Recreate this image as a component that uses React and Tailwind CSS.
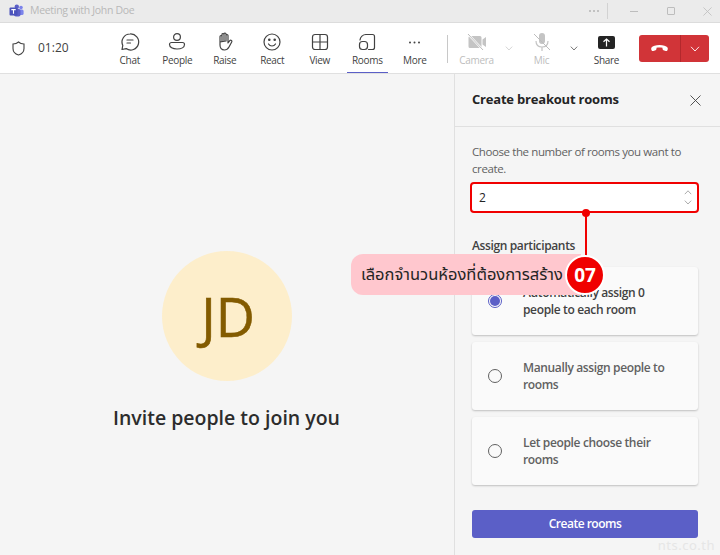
const Tool = ({ label, children, dim, active, w = "w-[47.5px]" }) => (
  <div className={`relative flex h-full shrink-0 flex-col items-center ${w}`}>
    <div className="mt-[7px] flex h-[24px] w-[24px] items-center justify-center">{children}</div>
    <span className={`-mt-[1px] text-[10px] leading-[14px] tracking-[-0.3px] ${dim ? "text-[#bdbdbd]" : "text-[#424242]"}`}>{label}</span>
    {active && <div className="absolute bottom-[0px] left-[3px] right-[3px] h-[1.5px] bg-[#5b5fc7]" />}
  </div>
);

const S = ({ children, c = "#424242", w = 1.2 }) => (
  <svg width="22" height="22" viewBox="0 0 22 22" fill="none" stroke={c} strokeWidth={w} strokeLinecap="round" strokeLinejoin="round">{children}</svg>
);

const Chevron = ({ c = "#616161", up, size = 10 }) => (
  <svg width={size} height={size * 0.6} viewBox="0 0 10 6" fill="none" stroke={c} strokeWidth="0.9">
    <path d={up ? "M1 5.2 5 1l4 4.2" : "M1 .8 5 5l4-4.2"} />
  </svg>
);

const Radio = ({ on }) => (
  <div className={`flex h-[14px] w-[14px] shrink-0 items-center justify-center rounded-full border ${on ? "border-[#5b5fc7]" : "border-[#616161]"}`}>
    {on && <div className="h-[10px] w-[10px] rounded-full bg-[#5b5fc7]" />}
  </div>
);

const Card = ({ on, children }) => (
  <div className={`flex h-[68px] items-center rounded-[3px] bg-[#fafafa] pl-[16px] pr-[20px] shadow-[0_1px_2px_rgba(0,0,0,0.22)] ${on ? "text-[#424242]" : "text-[#616161]"}`}>
    <Radio on={on} />
    <div className="ml-[21px] text-[12px] font-semibold leading-[17px] tracking-[-0.36px]">{children}</div>
  </div>
);

export default function App() {
  return (
    <div className="relative flex h-[555px] w-[720px] flex-col overflow-hidden bg-[#f5f5f5] font-['Open_Sans','Noto_Sans',sans-serif]">
      {/* Title bar */}
      <div className="flex h-[23px] shrink-0 items-center border-b border-[#dcdcdc] bg-[#ebebeb] pl-[9px]">
        <svg width="15" height="14" viewBox="0 0 15 14" className="shrink-0">
          <circle cx="12" cy="3.5" r="1.8" fill="#7b83eb" />
          <rect x="9" y="5.5" width="5.6" height="5.5" rx="1.6" fill="#7b83eb" />
          <circle cx="7.8" cy="2.8" r="2.2" fill="#5b5fc7" />
          <rect x="5" y="5" width="6.5" height="7.5" rx="1.8" fill="#5b5fc7" />
          <rect x="0.5" y="3.5" width="8" height="8" rx="1" fill="#4b53bc" />
          <path d="M2.3 5.6h4.4M4.5 5.6v4.2" stroke="#fff" strokeWidth="1.1" fill="none" />
        </svg>
        <span className="ml-[6px] text-[10.5px] tracking-[-0.3px] text-[#b8b8b8]">Meeting with John Doe</span>
        <div className="ml-auto flex items-center">
          <span className="mr-[8px] flex gap-[2px]">
            <i className="h-[2px] w-[2px] rounded-full bg-[#b5b5b5]" />
            <i className="h-[2px] w-[2px] rounded-full bg-[#b5b5b5]" />
            <i className="h-[2px] w-[2px] rounded-full bg-[#b5b5b5]" />
          </span>
          <div className="h-[16px] w-px bg-[#d2d2d2]" />
          <div className="ml-[22px] h-px w-[8px] bg-[#bdbdbd]" />
          <div className="ml-[29px] h-[8px] w-[8px] rounded-[1px] border border-[#bdbdbd]" />
          <svg width="9" height="9" viewBox="0 0 10 10" className="ml-[28px] mr-[8px]" stroke="#bdbdbd" strokeWidth="0.9">
            <path d="M.5.5l9 9M9.5.5l-9 9" />
          </svg>
        </div>
      </div>

      {/* Toolbar */}
      <div className="flex h-[51px] shrink-0 items-stretch border-b border-[#e0e0e0] bg-white">
        <div className="flex w-[106px] shrink-0 items-center pl-[12px]">
          <svg width="13" height="15" viewBox="0 0 13 15" fill="none" stroke="#424242" strokeWidth="1.1">
            <path d="M6.5 1C5 2.4 3 3 1 3v4.5C1 10.8 3.3 13 6.5 14 9.700 13 12 10.800 12 7.500V3C10 3 8 2.400 6.500 1z" />
          </svg>
          <span className="ml-[13px] text-[12px] text-[#424242]">01:20</span>
        </div>
        <Tool label="Chat">
          <S><path d="M11 3a8 8 0 0 0-7.200 11.400L3 18.500l4.200-.9A8 8 0 1 0 11 3z" /><path d="M8 9h6M8 12h3.500" /></S>
        </Tool>
        <Tool label="People">
          <S><circle cx="11" cy="6" r="3.400" /><path d="M5.500 11.500h11a2 2 0 0 1 2 2c0 2.700-3.200 4.500-7.500 4.500s-7.500-1.800-7.500-4.500a2 2 0 0 1 2-2z" /></S>
        </Tool>
        <Tool label="Raise">
          <S><path d="M6 11V5.500a1 1 0 0 1 2 0M8 10V3.500a1 1 0 0 1 2 0V10M10 10V3a1 1 0 0 1 2 0v7M12 10V4.500a1 1 0 0 1 2 0V12l1.800-2.300c1-1.200 2.700.1 1.900 1.300L15 16c-1 1.800-2.300 3-4.500 3C7.500 19 6 17 6 14v-3z" /></S>
        </Tool>
        <Tool label="React">
          <S><circle cx="11" cy="11" r="8" /><path d="M7.500 13c.8 1.300 2 2 3.500 2s2.700-.7 3.500-2" /><circle cx="8.300" cy="8.800" r=".7" fill="#424242" /><circle cx="13.700" cy="8.800" r=".7" fill="#424242" /></S>
        </Tool>
        <Tool label="View">
          <S><rect x="3.500" y="3.500" width="15" height="15" rx="2.500" /><path d="M11 3.500v15M3.500 11h15" /></S>
        </Tool>
        <Tool label="Rooms" active>
          <S><path d="M10 3.500h6.500a2 2 0 0 1 2 2v11a2 2 0 0 1-2 2h-4" /><path d="M10 3.500A6 6 0 0 0 4 9" /><rect x="3.500" y="10.500" width="8" height="8" rx="3" /></S>
        </Tool>
        <Tool label="More">
          <svg width="11" height="3" viewBox="0 0 11 3" fill="#424242"><circle cx="1" cy="1.500" r="1" /><circle cx="5.500" cy="1.500" r="1" /><circle cx="10" cy="1.500" r="1" /></svg>
        </Tool>
        <div className="ml-[8px] mr-[5px] mt-[12px] h-[28px] w-px shrink-0 bg-[#c8c8c8]" />
        <Tool label="Camera" dim w="w-[48px]">
          <svg width="22" height="22" viewBox="0 0 22 22">
            <path d="M4 5h10a1.500 1.500 0 0 1 1.500 1.500v9A1.500 1.500 0 0 1 14 17H4a1.500 1.500 0 0 1-1.500-1.500v-9A1.500 1.500 0 0 1 4 5z" fill="#c4c4c4" />
            <path d="M16.500 8.500 20 6v10l-3.500-2.500z" fill="#c4c4c4" />
            <path d="M2 3l15 16" stroke="#fff" strokeWidth="2" />
            <path d="M2 3l15 16" stroke="#bdbdbd" strokeWidth="1" />
          </svg>
        </Tool>
        <div className="flex w-[17px] shrink-0 justify-center pt-[23px]"><Chevron c="#c4c4c4" size={8} /></div>
        <Tool label="Mic" dim w="w-[48px]">
          <svg width="22" height="22" viewBox="0 0 22 22" fill="none">
            <rect x="8" y="2" width="6" height="11" rx="3" fill="#c4c4c4" />
            <path d="M5 10c0 4 2.500 6 6 6s6-2 6-6M11 16v4" stroke="#c4c4c4" strokeWidth="1.200" />
            <path d="M3 3l16 16" stroke="#bdbdbd" strokeWidth="1" />
          </svg>
        </Tool>
        <div className="flex w-[17px] shrink-0 justify-center pt-[23px]"><Chevron c="#424242" size={8} /></div>
        <Tool label="Share" w="w-[48px]">
          <div className="flex h-[13px] w-[17px] items-center justify-center rounded-[2px] bg-[#242424]">
            <svg width="9" height="9" viewBox="0 0 9 9" fill="none" stroke="#fff" strokeWidth="1.200"><path d="M4.500 8.500V1M1.500 3.800 4.500 1l3 2.800" /></svg>
          </div>
        </Tool>
        <div className="ml-[8px] mt-[12px] flex h-[27px] w-[70px] shrink-0 overflow-hidden rounded-[3px] bg-[#d13438]">
          <div className="flex w-[42px] items-center justify-center border-r border-[#b3282c]">
            <svg width="17" height="7" viewBox="0 0 17 7" fill="#fff">
              <path d="M8.500 0C4.800 0 1.600 1 .5 2.500c-.5.800-.4 2 .2 3 .4.600 1 .700 1.600.5l2.300-.8c.6-.2.900-.8.900-1.400v-1c1.900-.5 4-.5 6 0v1c0 .6.300 1.200.9 1.400l2.300.8c.6.200 1.200.1 1.600-.5.600-1 .700-2.200.2-3C15.400 1 12.200 0 8.500 0z" />
            </svg>
          </div>
          <div className="flex flex-1 items-center justify-center"><Chevron c="#fff" /></div>
        </div>
      </div>

      {/* Body */}
      <div className="flex min-h-0 flex-1">
        <main className="flex flex-1 flex-col items-center pr-[1px] pt-[177px]">
          <div className="flex h-[130px] w-[130px] items-center justify-center rounded-full bg-[#fdeecb] pl-[3px] text-[54px] font-normal leading-none text-[#835b00] [-webkit-text-stroke:0.6px_#835b00]">JD</div>
          <div className="mt-[24px] text-[19.5px] font-semibold leading-[26px] text-[#2c2c2c]">Invite people to join you</div>
        </main>
        <aside className="flex w-[266px] shrink-0 flex-col border-l border-[#e0e0e0]">
          <div className="flex h-[53px] shrink-0 items-center justify-between border-b border-[#e0e0e0] pl-[17px] pr-[19px]">
            <h2 className="text-[13px] font-bold tracking-[-0.2px] text-[#242424]">Create breakout rooms</h2>
            <svg width="11" height="11" viewBox="0 0 11 11" stroke="#424242" strokeWidth="0.9"><path d="M.5.5l10 10M10.500.5l-10 10" /></svg>
          </div>
          <div className="flex flex-1 flex-col pl-[17px] pr-[22px]">
            <p className="mt-[16px] text-[11.5px] leading-[17px] tracking-[-0.4px] text-[#616161]">Choose the number of rooms you want to create.</p>
            <div className="-ml-[2px] -mr-[1px] mt-[5px] flex h-[31px] items-center justify-between rounded-[4px] border-2 border-[#f00000] bg-white pl-[7px] pr-[5px]">
              <span className="text-[12px] text-[#242424]">2</span>
              <div className="flex flex-col gap-[5px]">
                <Chevron up size={8} c="#8a8a8a" />
                <Chevron size={8} c="#8a8a8a" />
              </div>
            </div>
            <h3 className="mt-[24px] text-[12px] font-semibold leading-[17px] tracking-[-0.37px] text-[#424242]">Assign participants</h3>
            <div className="mt-[13px] flex flex-col gap-[7px]">
              <Card on>Automatically assign 0 people to each room</Card>
              <Card>Manually assign people to rooms</Card>
              <Card>Let people choose their rooms</Card>
            </div>
            <button className="mt-[25px] h-[28px] rounded-[3px] bg-[#5b5fc7] text-[12px] font-semibold tracking-[-0.5px] text-white">Create rooms</button>
          </div>
        </aside>
      </div>

      {/* Callout overlay */}
      <div className="absolute left-[585px] top-[212px] h-[44px] w-[2px] bg-[#f00000]" />
      <div className="absolute left-[582px] top-[209px] h-[8px] w-[8px] rounded-full bg-[#f00000]" />
      <div className="absolute left-[351px] top-[254px] flex h-[41px] w-[230px] items-center whitespace-nowrap rounded-l-[12px] bg-[#ffc7ce] pl-[10px] font-['Noto_Sans','Noto_Sans_Thai',sans-serif] text-[16.5px] text-[#242424]">เลือกจำนวนห้องที่ต้องการสร้าง</div>
      <div className="absolute left-[565px] top-[255px] flex h-[40px] w-[40px] items-center justify-center rounded-full border-2 border-white bg-[#f00000] text-[19px] font-bold text-white">07</div>
      <div className="absolute bottom-[0px] right-[5px] font-['Noto_Sans',sans-serif] text-[13px] tracking-[0.5px] text-[#e6e6e6]">nts.co.th</div>
    </div>
  );
}
